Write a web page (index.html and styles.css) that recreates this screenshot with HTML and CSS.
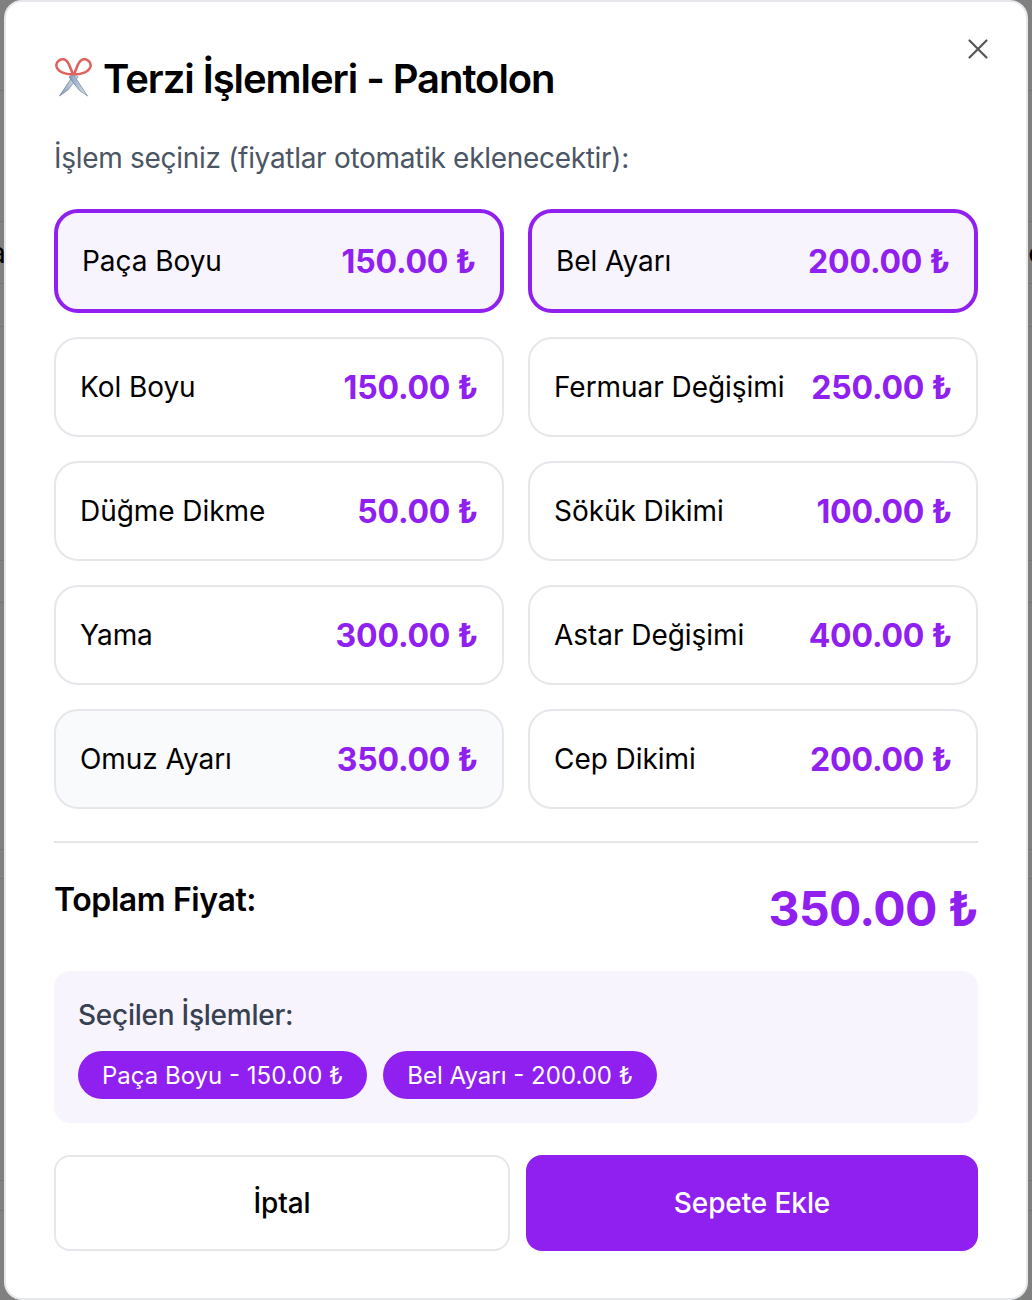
FILE: index.html
```html
<!DOCTYPE html>
<html lang="tr">

<head>
  <meta charset="UTF-8" />
  <title>Terzi İşlemleri - Pantolon</title>
  <meta name="viewport" content="width=device-width, initial-scale=1.0" />
  <link rel="stylesheet" href="styles.css">
</head>

<body>
  <span class="peek peek-left">a</span>
  <span class="peek peek-right">o</span>

  <main class="modal">
    <button class="close" aria-label="Kapat">
      <svg width="24" height="24" viewBox="0 0 24 24" fill="none" stroke="#555" stroke-width="2.200" stroke-linecap="round">
        <path d="M3.500 3.500l17 17M20.500 3.500l-17 17" />
      </svg>
    </button>

    <h2 class="title">
      <svg class="scissors" width="40" height="40" viewBox="0 0 40 40" fill="none">
        <defs>
          <linearGradient id="blade" x1="0" y1="0" x2="1" y2="0">
            <stop offset="0" stop-color="#7f9ab8" />
            <stop offset="1" stop-color="#dfe9f2" />
          </linearGradient>
        </defs>
        <path d="M20 16L5.500 38 14 32 24 19z" fill="url(#blade)" stroke="#6f8397" stroke-width=".7" />
        <path d="M19 16L33.500 38 25 32 15 19z" fill="url(#blade)" stroke="#6f8397" stroke-width=".7" />
        <path d="M19 16C14 17 4 14.500 2.500 8.500 1.500 3.500 6.500 .5 10.500 1.500 15 2.700 15.500 9 19 16z" stroke="#e0625f" stroke-width="2.600" stroke-linejoin="round" />
        <path d="M20 16C25 17 35 14.500 36.500 8.500 37.500 3.500 32.500 .5 28.500 1.500 24 2.700 23.500 9 20 16z" stroke="#e0625f" stroke-width="2.600" stroke-linejoin="round" />
      </svg>
      Terzi İşlemleri - Pantolon
    </h2>
    <p class="hint">İşlem seçiniz (fiyatlar otomatik eklenecektir):</p>

    <div class="services">
      <button class="service selected"><span>Paça Boyu</span><b>150.00 ₺</b></button>
      <button class="service selected"><span>Bel Ayarı</span><b>200.00 ₺</b></button>
      <button class="service"><span>Kol Boyu</span><b>150.00 ₺</b></button>
      <button class="service"><span>Fermuar Değişimi</span><b>250.00 ₺</b></button>
      <button class="service"><span>Düğme Dikme</span><b>50.00 ₺</b></button>
      <button class="service"><span>Sökük Dikimi</span><b>100.00 ₺</b></button>
      <button class="service"><span>Yama</span><b>300.00 ₺</b></button>
      <button class="service"><span>Astar Değişimi</span><b>400.00 ₺</b></button>
      <button class="service hover"><span>Omuz Ayarı</span><b>350.00 ₺</b></button>
      <button class="service"><span>Cep Dikimi</span><b>200.00 ₺</b></button>
    </div>

    <div class="total">
      <span class="total-label">Toplam Fiyat:</span>
      <span class="total-price">350.00 ₺</span>
    </div>

    <section class="chosen">
      <div class="chosen-title">Seçilen İşlemler:</div>
      <div class="chips">
        <span class="chip">Paça Boyu - 150.00 ₺</span>
        <span class="chip">Bel Ayarı - 200.00 ₺</span>
      </div>
    </section>

    <footer class="actions">
      <button class="cancel">İptal</button>
      <button class="add">Sepete Ekle</button>
    </footer>
  </main>
</body>

</html>
```

FILE: styles.css
```css
:root {
  --purple: #9020f0;
  --purple-light: #f7f4fe;
  --border: #e5e7eb;
  --row-line: linear-gradient(#747474, #747474);
}

html,
body {
  height: 100%;
}

/* dimmed page behind the modal, only its table rows show at the edges */
body {
  margin: 0;
  padding: 0 4px;
  box-sizing: border-box;
  overflow: hidden;
  background-color: #808080;
  background-image: var(--row-line), var(--row-line), var(--row-line), var(--row-line), var(--row-line), var(--row-line), var(--row-line), var(--row-line), var(--row-line), var(--row-line);
  background-size: 100% 1px;
  background-repeat: no-repeat;
  background-position: 0 90px, 0 221px, 0 283px, 0 326px, 0 560px, 0 602px, 0 849px, 0 878px, 0 1180px, 0 1210px;
  font-family: Inter, "Noto Sans", sans-serif;
  color: #000;
}

button {
  font-family: inherit;
  color: inherit;
  cursor: pointer;
}

.peek {
  position: absolute;
  top: 236px;
  font-size: 28px;
}

.peek-left {
  left: -10px;
}

.peek-right {
  right: -13px;
}

/* modal */
.modal {
  position: relative;
  box-sizing: border-box;
  width: 1024px;
  height: 1300px;
  padding: 48px 48px 0;
  background-color: #fff;
  border: 2px solid var(--border);
  border-radius: 18px;
}

.close {
  position: absolute;
  top: 35px;
  right: 36px;
  display: flex;
  padding: 0;
  border: 0;
  background: none;
}

.title {
  display: flex;
  align-items: center;
  gap: 9px;
  height: 56px;
  margin: 0;
  font-size: 40px;
  font-weight: 600;
  letter-spacing: -1.06px;
}

.hint {
  margin: 35px 0 0;
  font-size: 28px;
  line-height: 34px;
  letter-spacing: -0.3px;
  color: #4b5563;
}

/* services */
.services {
  display: grid;
  grid-template-columns: 1fr 1fr;
  gap: 24px;
  margin-top: 34px;
}

.service {
  display: flex;
  align-items: center;
  justify-content: space-between;
  box-sizing: border-box;
  height: 100px;
  padding: 0 24px;
  background-color: #fff;
  border: 2px solid var(--border);
  border-radius: 24px;
  font-size: 28px;
  letter-spacing: -0.05px;
}

.service b {
  font-size: 32px;
  font-weight: 700;
  letter-spacing: -0.2px;
  color: var(--purple);
}

.service.selected {
  height: 104px;
  background-color: var(--purple-light);
  border: 4px solid var(--purple);
}

.service.hover {
  background-color: #f9fafb;
}

/* total */
.total {
  display: flex;
  justify-content: space-between;
  align-items: flex-start;
  margin-top: 32px;
  padding-top: 36px;
  border-top: 2px solid var(--border);
}

.total-label {
  margin-top: 1px;
  font-size: 32px;
  font-weight: 600;
  letter-spacing: -0.4px;
}

.total-price {
  font-size: 48px;
  font-weight: 700;
  letter-spacing: -0.6px;
  color: var(--purple);
}

/* chosen */
.chosen {
  margin-top: 33px;
  padding: 24px;
  background-color: var(--purple-light);
  border-radius: 16px;
}

.chosen-title {
  font-size: 28px;
  line-height: 40px;
  font-weight: 500;
  letter-spacing: -0.25px;
  color: #374151;
}

.chips {
  display: flex;
  gap: 16px;
  margin-top: 16px;
}

.chip {
  padding: 9px 24px 7px;
  background-color: var(--purple);
  border-radius: 24px;
  color: #fff;
  font-size: 24px;
  line-height: 32px;
}

/* actions */
.actions {
  display: flex;
  gap: 16px;
  margin-top: 32px;
}

.actions button {
  flex: 1;
  height: 96px;
  border-radius: 16px;
  font-size: 28px;
  font-weight: 500;
  letter-spacing: -0.1px;
}

.cancel {
  background-color: #fff;
  border: 2px solid var(--border);
}

.add {
  background-color: var(--purple);
  border: 0;
  color: #fff;
}
```
